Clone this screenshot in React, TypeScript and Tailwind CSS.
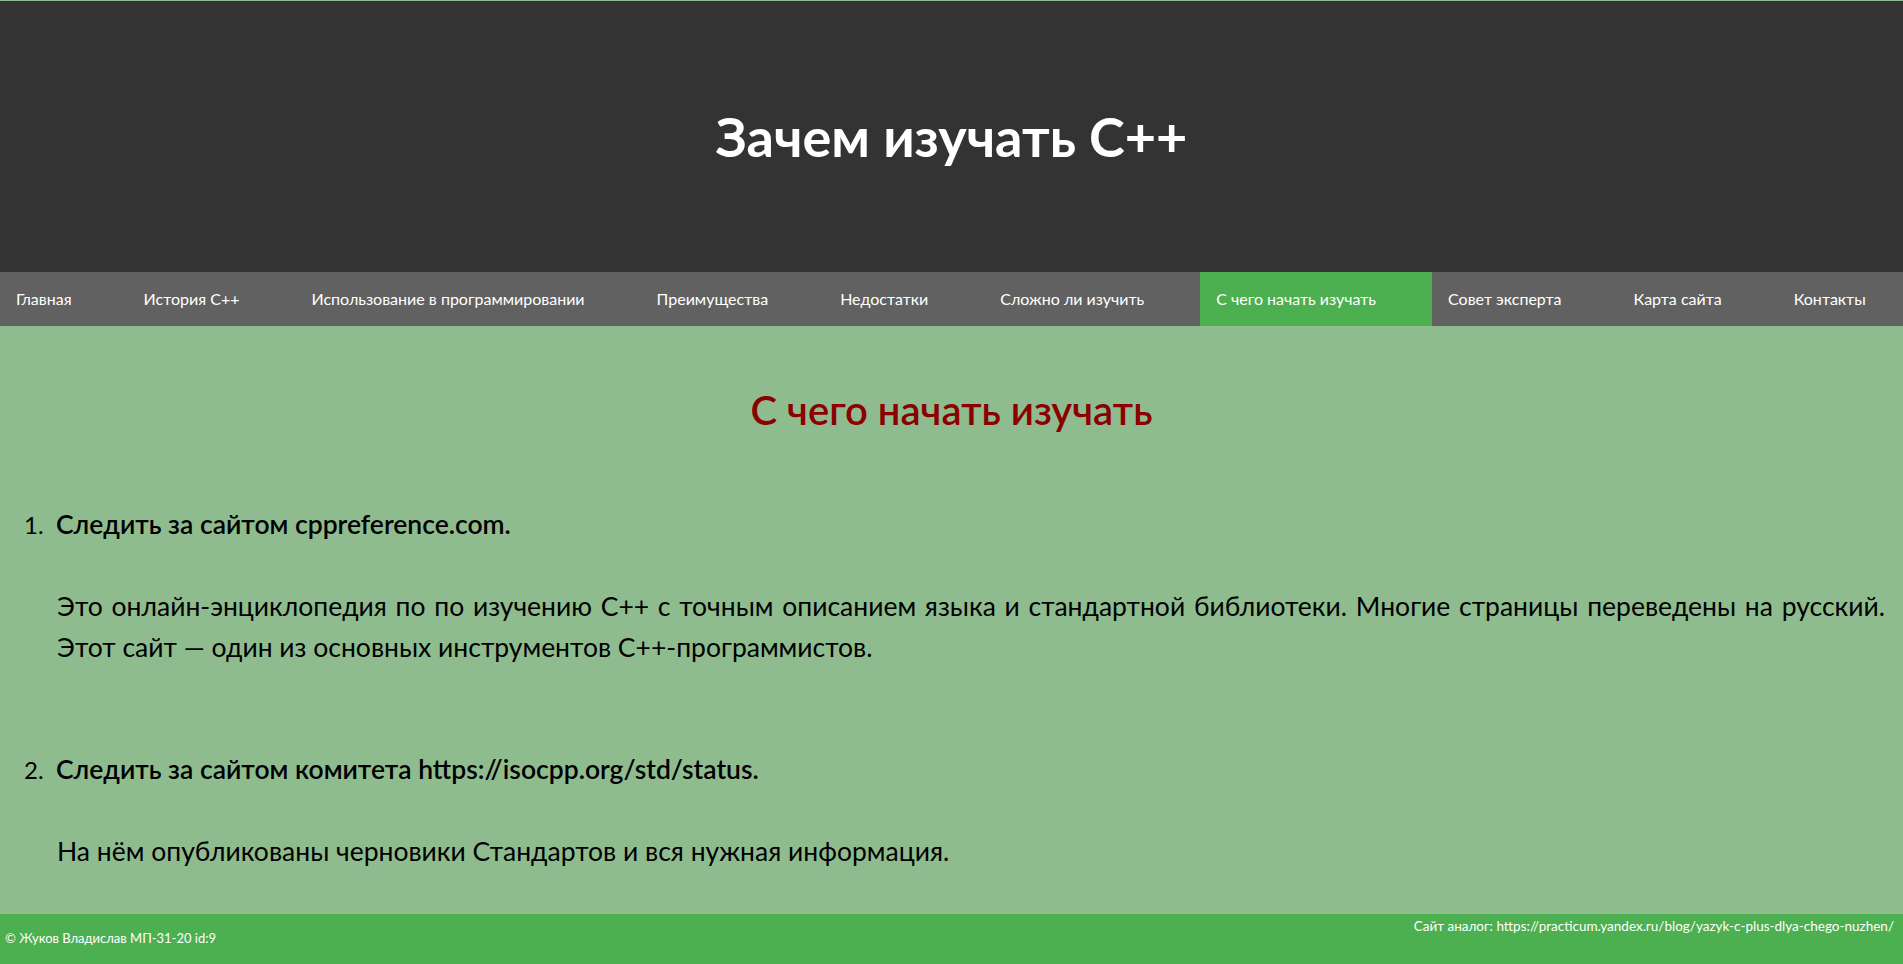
const NAV = [
  'Главная',
  'История C++',
  'Использование в программировании',
  'Преимущества',
  'Недостатки',
  'Сложно ли изучить',
  'С чего начать изучать',
  'Совет эксперта',
  'Карта сайта',
  'Контакты',
];

const ACTIVE = 'С чего начать изучать';

export default function App() {
  return (
    <div className="min-h-screen flex flex-col bg-[#8fbc8f] pt-px font-['Lato',sans-serif] text-black">
      <header className="h-[271px] bg-[#333333] flex items-center justify-center">
        <h1 className="text-[54px] font-bold text-white leading-none">Зачем изучать C++</h1>
      </header>

      <nav className="h-[54px] bg-[#616161] flex overflow-hidden">
        {NAV.map((item) => (
          <a
            key={item}
            href="#"
            className={`flex shrink-0 items-center whitespace-nowrap pl-4 pr-[56px] text-[16px] text-white ${item === ACTIVE ? 'bg-[#4caf50]' : ''}`}
          >
            {item}
          </a>
        ))}
      </nav>

      <main className="flex-1 pt-[60px]">
        <h2 className="text-center text-[40px] leading-[48px] font-semibold text-[#8b0000]">С чего начать изучать</h2>

        <ol className="mt-[72px] pr-[18px]">
          <li>
            <div className="flex items-baseline leading-[36px]">
              <span className="w-[56px] pl-[24px] shrink-0 text-[24px]">1.</span>
              <span className="text-[26.5px] font-semibold">Следить за сайтом cppreference.com.</span>
            </div>
            <p className="mt-[43px] pl-[57px] text-[26.5px] leading-[41px]">
              <span className="block text-justify [text-align-last:justify]">
                Это онлайн-энциклопедия по по изучению C++ с точным описанием языка и стандартной библиотеки. Многие страницы переведены на русский.
              </span>
              <span className="block">Этот сайт — один из основных инструментов C++-программистов.</span>
            </p>
          </li>
          <li className="mt-[83px]">
            <div className="flex items-baseline leading-[36px]">
              <span className="w-[56px] pl-[24px] shrink-0 text-[24px]">2.</span>
              <span className="text-[26.5px] font-semibold">Следить за сайтом комитета https://isocpp.org/std/status.</span>
            </div>
            <p className="mt-[43px] pl-[57px] text-[26.5px] leading-[41px]">
              На нём опубликованы черновики Стандартов и вся нужная информация.
            </p>
          </li>
        </ol>
      </main>

      <footer className="h-[50px] bg-[#4caf50] flex items-center justify-between px-[5px] text-[13px] text-white">
        <span>© Жуков Владислав МП-31-20 id:9</span>
        <span className="self-start pt-[2px] pr-[4px] text-[13.5px]">Сайт аналог: https://practicum.yandex.ru/blog/yazyk-c-plus-dlya-chego-nuzhen/</span>
      </footer>
    </div>
  );
}
